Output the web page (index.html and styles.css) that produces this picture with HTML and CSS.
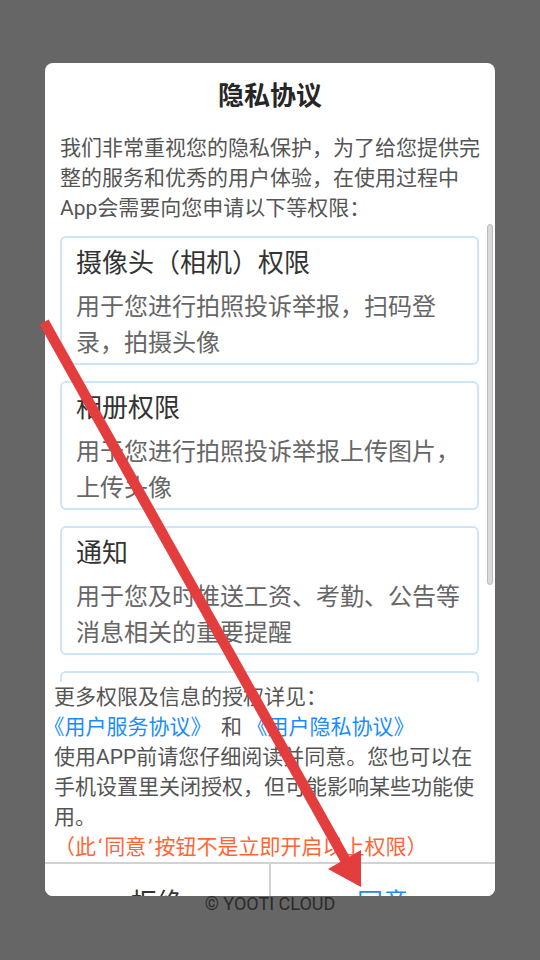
FILE: index.html
```html
<!DOCTYPE html>
<html lang="zh">
<head>
    <meta charset="UTF-8">
    <title>隐私协议</title>
    <link rel="stylesheet" href="styles.css">
</head>
<body>

<div class="dialog">
    <h2 class="dialog-title">隐私协议</h2>
    <p class="intro">我们非常重视您的隐私保护，为了给您提供完整的服务和优秀的用户体验，在使用过程中App会需要向您申请以下等权限：</p>

    <div class="perm-scroll">
        <div class="perm-card">
            <h4>摄像头（相机）权限</h4>
            <p>用于您进行拍照投诉举报，扫码登录，拍摄头像</p>
        </div>
        <div class="perm-card">
            <h4>相册权限</h4>
            <p>用于您进行拍照投诉举报上传图片，上传头像</p>
        </div>
        <div class="perm-card">
            <h4>通知</h4>
            <p>用于您及时推送工资、考勤、公告等消息相关的重要提醒</p>
        </div>
        <div class="perm-card">
            <h4>定位权限</h4>
            <p>用于您进行考勤打卡</p>
        </div>
        <div class="scroll-thumb"></div>
    </div>

    <div class="notice">
        <p>更多权限及信息的授权详见：</p>
        <p><a class="link">《用户服务协议》</a><span class="and">和</span><a class="link">《用户隐私协议》</a></p>
        <p>使用APP前请您仔细阅读并同意。您也可以在手机设置里关闭授权，但可能影响某些功能使用。</p>
        <p class="warn">（此<span class="q">‘</span>同意<span class="q">’</span>按钮不是立即开启以上权限）</p>
    </div>

    <div class="actions">
        <button class="btn-refuse">拒绝</button>
        <button class="btn-agree">同意</button>
    </div>
</div>

<div class="copyright">© YOOTI CLOUD</div>

<svg class="arrow" width="540" height="960" viewBox="0 0 540 960">
    <line x1="44" y1="322" x2="346" y2="861" stroke="#e33d3d" stroke-width="10.5"/>
    <polygon points="328,869 361,850 361,887" fill="#e33d3d"/>
</svg>

</body>
</html>
```

FILE: styles.css
```css
body {
    margin: 0;
    padding-top: 63px;
    background: #666666;
    font-family: Roboto, "Noto Sans CJK SC", sans-serif;
    position: relative;
    height: 897px;
}

.dialog {
    width: 450px;
    height: 833px;
    margin: 0 auto;
    background: #fff;
    border-radius: 8px;
    overflow: hidden;
}

.dialog-title {
    margin: 0;
    padding-top: 15px;
    font-size: 26px;
    line-height: 36px;
    font-weight: bold;
    color: #262626;
    text-align: center;
}

.intro {
    margin: 19px 0 0;
    padding: 0 14px 0 15px;
    font-size: 21px;
    line-height: 30px;
    color: #555;
}

.perm-scroll {
    position: relative;
    height: 459px;
    padding: 13px 16px 0 15px;
    box-sizing: border-box;
    overflow: hidden;
}

.perm-card {
    border: 2px solid #cbe5fb;
    border-radius: 6px;
    padding: 7px 14px 2px;
    margin-bottom: 16px;
}

.perm-card h4 {
    margin: 0;
    font-size: 26px;
    line-height: 36px;
    font-weight: normal;
    color: #333;
}

.perm-card p {
    margin: 8px 0 0;
    font-size: 24px;
    line-height: 36px;
    color: #666;
}

.scroll-thumb {
    position: absolute;
    left: 442px;
    top: 1px;
    width: 4px;
    height: 359px;
    background: #d9d9d9;
    border: 1px solid #bcbcbc;
    border-radius: 3px;
}

.notice {
    padding: 0 13px 0 9px;
    font-size: 21px;
    line-height: 30px;
    color: #555;
}

.notice p {
    margin: 0;
}

.link {
    color: #1a8cff;
    font-feature-settings: "halt";
}

.and {
    margin: 0 15px 0 20px;
}

.warn {
    color: #ff6633;
}

.q {
    padding: 0 2px;
}

.actions {
    display: flex;
    border-top: 2px solid #d2d2d2;
    height: 72px;
}

.actions button {
    flex: 1;
    border: none;
    background: #fff;
    font-family: Roboto, "Noto Sans CJK SC", sans-serif;
    font-size: 26px;
    padding: 0;
}

.btn-refuse {
    color: #333;
    border-right: 2px solid #d2d2d2 !important;
}

.btn-agree {
    color: #1a8cff;
}

.copyright {
    position: absolute;
    top: 893px;
    left: 0;
    right: 0;
    text-align: center;
    font-size: 18px;
    line-height: 21px;
    color: #2b2b2b;
}

.arrow {
    position: absolute;
    left: 0;
    top: 0;
}
```
